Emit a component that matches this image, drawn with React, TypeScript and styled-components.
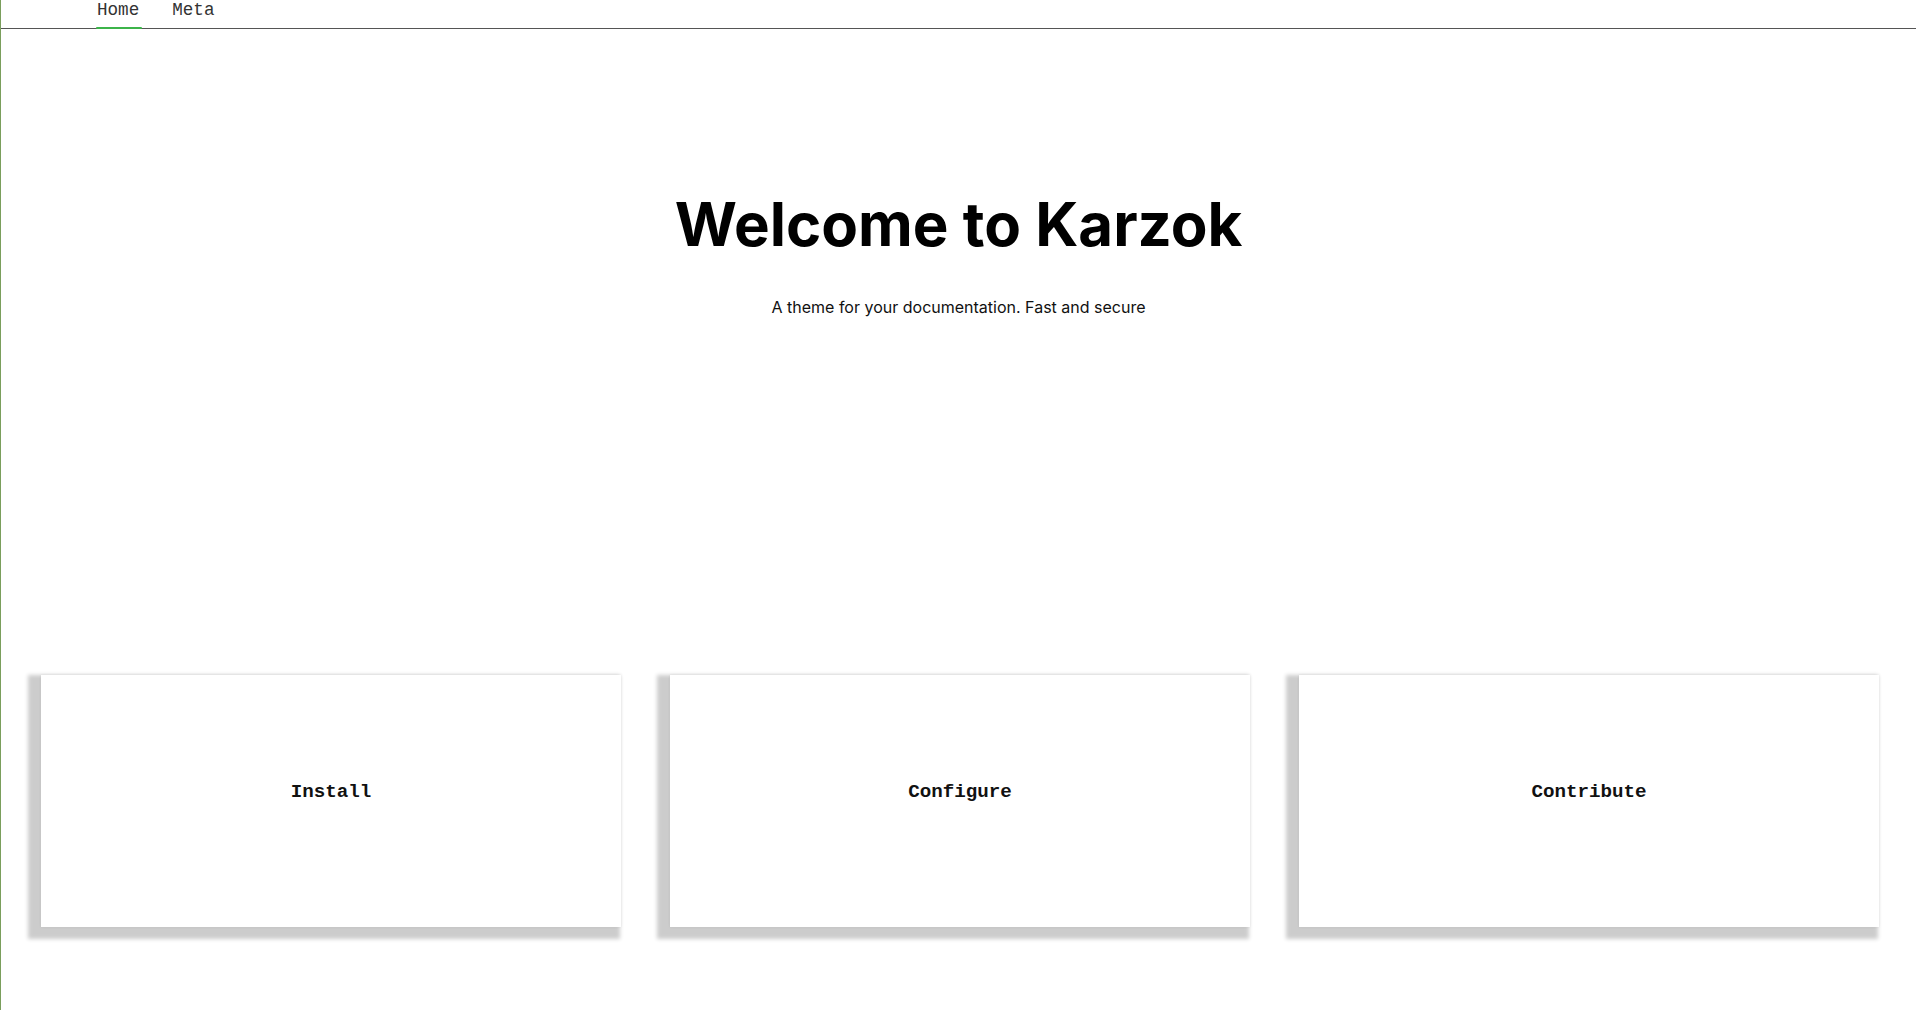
import React from "react";
import styled, { createGlobalStyle } from "styled-components";

const GlobalStyle = createGlobalStyle`
  html, body {
    margin: 0;
    padding: 0;
    background: #ffffff;
  }
  * { box-sizing: border-box; }
`;

const Page = styled.div`
  min-height: 100vh;
  border-left: 1px solid #7a9e5c;
  display: flex;
  flex-direction: column;
  font-family: Inter, "Noto Sans", sans-serif;
  color: #000;
`;

const Header = styled.header`
  height: 29px;
  border-bottom: 1px solid #555555;
  display: flex;
  align-items: flex-start;
  padding-left: 94px;
`;

const Nav = styled.nav`
  display: flex;
  gap: 29px;
  height: 28px;
`;

const NavLink = styled.a<{ $active?: boolean }>`
  position: relative;
  display: block;
  height: 28px;
  padding: 0 2px;
  font-family: "Liberation Mono", "Courier New", monospace;
  font-size: 17.6px;
  line-height: 20px;
  color: #333333;
  text-decoration: none;
  cursor: pointer;

  &::after {
    content: "";
    display: ${(p) => (p.$active ? "block" : "none")};
    position: absolute;
    left: 1px;
    right: -1px;
    bottom: -1px;
    height: 2px;
    border-radius: 2px;
    background: #3cb44a;
  }
`;

const Hero = styled.section`
  display: flex;
  flex-direction: column;
  align-items: center;
  padding-top: 159px;
`;

const Title = styled.h1`
  margin: 0;
  font-family: Inter, "Noto Sans", sans-serif;
  font-weight: 700;
  font-size: 60px;
  line-height: 72px;
  color: #000;
`;

const Subtitle = styled.p`
  margin: 35px 0 0;
  font-family: Inter, "Noto Sans", sans-serif;
  font-size: 16px;
  line-height: 24px;
  color: #111;
`;

const Cards = styled.section`
  display: grid;
  grid-template-columns: repeat(3, 580px);
  column-gap: 49px;
  padding-left: 40px;
  margin-top: 356px;
`;

const Card = styled.a`
  height: 252px;
  background: #ffffff;
  display: flex;
  align-items: center;
  justify-content: center;
  padding-bottom: 18px;
  box-shadow: -7px 6px 4px 6px rgba(0, 0, 0, 0.2), 0 0 3px rgba(0, 0, 0, 0.07);
  font-family: "Liberation Mono", "Courier New", monospace;
  font-weight: 700;
  font-size: 19.2px;
  color: #111;
  text-decoration: none;
  cursor: pointer;
`;

export default function App() {
  return (
    <>
      <GlobalStyle />
      <Page>
        <Header>
          <Nav>
            <NavLink $active>Home</NavLink>
            <NavLink>Meta</NavLink>
          </Nav>
        </Header>
        <Hero>
          <Title>Welcome to Karzok</Title>
          <Subtitle>A theme for your documentation. Fast and secure</Subtitle>
        </Hero>
        <Cards>
          <Card>Install</Card>
          <Card>Configure</Card>
          <Card>Contribute</Card>
        </Cards>
      </Page>
    </>
  );
}
